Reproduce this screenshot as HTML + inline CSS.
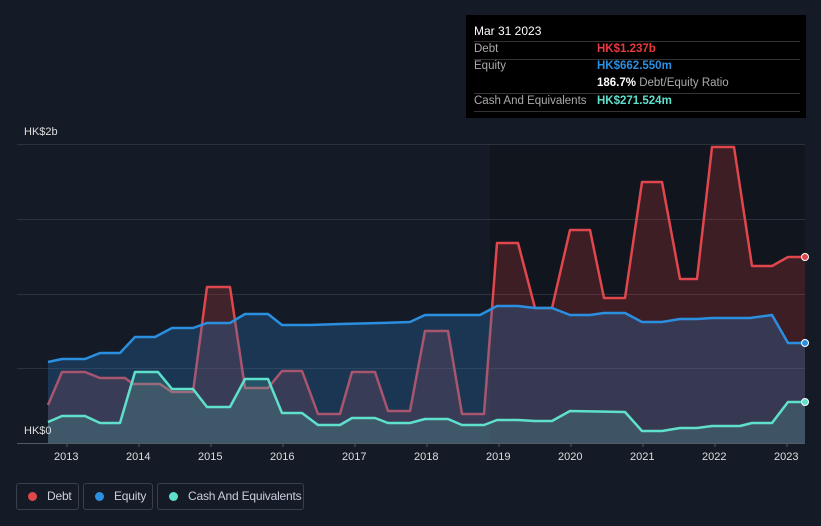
<!DOCTYPE html><html><head><style>
html,body{margin:0;width:821px;height:526px;background:#151b26;font-family:"Liberation Sans",sans-serif;overflow:hidden;position:relative}
.tt{position:absolute;left:466px;top:15px;width:340px;height:103px;background:#000;color:#fff;font-size:11.5px}
.tt .r{position:absolute;left:8px;right:6px;border-top:1px solid #333}
.lg{position:absolute;top:483px;height:27px;border:1px solid #3a404a;border-radius:3px;color:#ccd;font-size:12px;line-height:25px;box-sizing:border-box;white-space:nowrap;letter-spacing:-0.2px}
.lg i{display:inline-block;width:9px;height:9px;border-radius:50%;margin:0 10px 0 11px;vertical-align:-1px}
.ax{position:absolute;top:451px;color:#ddd;font-size:11px}
</style></head><body>
<svg width="821" height="526" style="position:absolute;left:0;top:0">
<rect x="490" y="144" width="315" height="299" fill="#10151e"/>
<g stroke="#2c323c" stroke-width="1"><line x1="17" y1="144.5" x2="805" y2="144.5"/><line x1="17" y1="219.5" x2="805" y2="219.5"/><line x1="17" y1="294.5" x2="805" y2="294.5"/><line x1="17" y1="368.5" x2="805" y2="368.5"/></g>
<g stroke-width="2.5" stroke-linejoin="round">
<path fill="rgba(200,60,60,0.25)" stroke="none" d="M48,405 L62,372 L85,372 L100,378 L125,378 L133,384 L160,384 L172,392 L193,392 L207,287 L230,287 L245,388 L268,388 L282,371 L302,371 L318,414 L340,414 L352,372 L375,372 L388,411 L410,411 L425,331 L448,331 L462,414 L484,414 L497,243 L518,243 L535,308 L552,308 L570,230 L590,230 L604,298 L625,298 L642,182 L662,182 L680,279 L697,279 L712,147 L734,147 L752,266 L772,266 L788,257 L805,257 L805,443 L48,443Z"/>
<path fill="none" stroke="#e0474c" d="M48,405 L62,372 L85,372 L100,378 L125,378 L133,384 L160,384 L172,392 L193,392 L207,287 L230,287 L245,388 L268,388 L282,371 L302,371 L318,414 L340,414 L352,372 L375,372 L388,411 L410,411 L425,331 L448,331 L462,414 L484,414 L497,243 L518,243 L535,308 L552,308 L570,230 L590,230 L604,298 L625,298 L642,182 L662,182 L680,279 L697,279 L712,147 L734,147 L752,266 L772,266 L788,257 L805,257"/>
<path fill="rgba(40,120,190,0.3)" stroke="none" d="M48,362 L62,359 L85,359 L100,353 L120,353 L135,337 L155,337 L172,328 L193,328 L207,323 L230,323 L245,314 L268,314 L282,325 L310,325 L340,324 L380,323 L410,322 L425,315 L480,315 L497,306 L518,306 L535,308 L552,308 L570,315 L590,315 L604,313 L625,313 L642,322 L662,322 L680,319 L697,319 L712,318 L750,318 L772,315 L788,343 L805,343 L805,443 L48,443Z"/>
<path fill="none" stroke="#2b8fe0" d="M48,362 L62,359 L85,359 L100,353 L120,353 L135,337 L155,337 L172,328 L193,328 L207,323 L230,323 L245,314 L268,314 L282,325 L310,325 L340,324 L380,323 L410,322 L425,315 L480,315 L497,306 L518,306 L535,308 L552,308 L570,315 L590,315 L604,313 L625,313 L642,322 L662,322 L680,319 L697,319 L712,318 L750,318 L772,315 L788,343 L805,343"/>
<path fill="rgba(90,200,180,0.2)" stroke="none" d="M48,422 L62,416 L85,416 L100,423 L120,423 L135,372 L158,372 L172,389 L193,389 L207,407 L230,407 L245,379 L268,379 L282,413 L302,413 L318,425 L340,425 L352,418 L375,418 L388,423 L410,423 L425,419 L448,419 L462,425 L484,425 L497,420 L518,420 L535,421 L552,421 L570,411 L625,412 L642,431 L662,431 L680,428 L697,428 L712,426 L740,426 L752,423 L772,423 L788,402 L805,402 L805,443 L48,443Z"/>
<path fill="none" stroke="#5fe0cc" d="M48,422 L62,416 L85,416 L100,423 L120,423 L135,372 L158,372 L172,389 L193,389 L207,407 L230,407 L245,379 L268,379 L282,413 L302,413 L318,425 L340,425 L352,418 L375,418 L388,423 L410,423 L425,419 L448,419 L462,425 L484,425 L497,420 L518,420 L535,421 L552,421 L570,411 L625,412 L642,431 L662,431 L680,428 L697,428 L712,426 L740,426 L752,423 L772,423 L788,402 L805,402"/>
</g>
<line x1="17" y1="443.5" x2="805" y2="443.5" stroke="#555b66"/>
<g stroke="#555b66"><line x1="67" y1="443" x2="67" y2="447"/><line x1="139" y1="443" x2="139" y2="447"/><line x1="211" y1="443" x2="211" y2="447"/><line x1="283" y1="443" x2="283" y2="447"/><line x1="355" y1="443" x2="355" y2="447"/><line x1="427" y1="443" x2="427" y2="447"/><line x1="499" y1="443" x2="499" y2="447"/><line x1="571" y1="443" x2="571" y2="447"/><line x1="643" y1="443" x2="643" y2="447"/><line x1="715" y1="443" x2="715" y2="447"/><line x1="787" y1="443" x2="787" y2="447"/></g>
<circle cx="805" cy="257" r="3.5" fill="#e0474c" stroke="#fff"/><circle cx="805" cy="343" r="3.5" fill="#2b8fe0" stroke="#fff"/><circle cx="805" cy="402" r="3.5" fill="#5fe0cc" stroke="#fff"/>
</svg>
<div style="position:absolute;left:24px;top:126px;color:#ddd;font-size:11px">HK$2b</div>
<div style="position:absolute;left:24px;top:425px;color:#ddd;font-size:11px">HK$0</div>
<div class="ax" style="left:54px">2013</div><div class="ax" style="left:126px">2014</div><div class="ax" style="left:198px">2015</div><div class="ax" style="left:270px">2016</div><div class="ax" style="left:342px">2017</div><div class="ax" style="left:414px">2018</div><div class="ax" style="left:486px">2019</div><div class="ax" style="left:558px">2020</div><div class="ax" style="left:630px">2021</div><div class="ax" style="left:702px">2022</div><div class="ax" style="left:774px">2023</div>
<div class="tt">
<div style="position:absolute;left:8px;top:9px;font-size:12px">Mar 31 2023</div>
<div class="r" style="top:26px"></div>
<div style="position:absolute;left:8px;top:28px;color:#aaa">Debt</div><div style="position:absolute;left:131px;top:28px;color:#e8393e;font-weight:bold">HK$1.237b</div>
<div class="r" style="top:44px"></div>
<div style="position:absolute;left:8px;top:45px;color:#aaa">Equity</div><div style="position:absolute;left:131px;top:45px;color:#2b8fe0;font-weight:bold">HK$662.550m</div>
<div style="position:absolute;left:131px;top:62px;color:#aaa"><b style="color:#fff">186.7%</b> Debt/Equity Ratio</div>
<div class="r" style="top:78px"></div>
<div style="position:absolute;left:8px;top:80px;color:#aaa">Cash And Equivalents</div><div style="position:absolute;left:131px;top:80px;color:#5fe0cc;font-weight:bold">HK$271.524m</div>
<div class="r" style="top:96px"></div>
</div>
<div class="lg" style="left:16px;width:63px"><i style="background:#e0474c"></i>Debt</div>
<div class="lg" style="left:83px;width:70px"><i style="background:#2b8fe0"></i>Equity</div>
<div class="lg" style="left:157px;width:147px"><i style="background:#5fe0cc"></i>Cash And Equivalents</div>
</body></html>
